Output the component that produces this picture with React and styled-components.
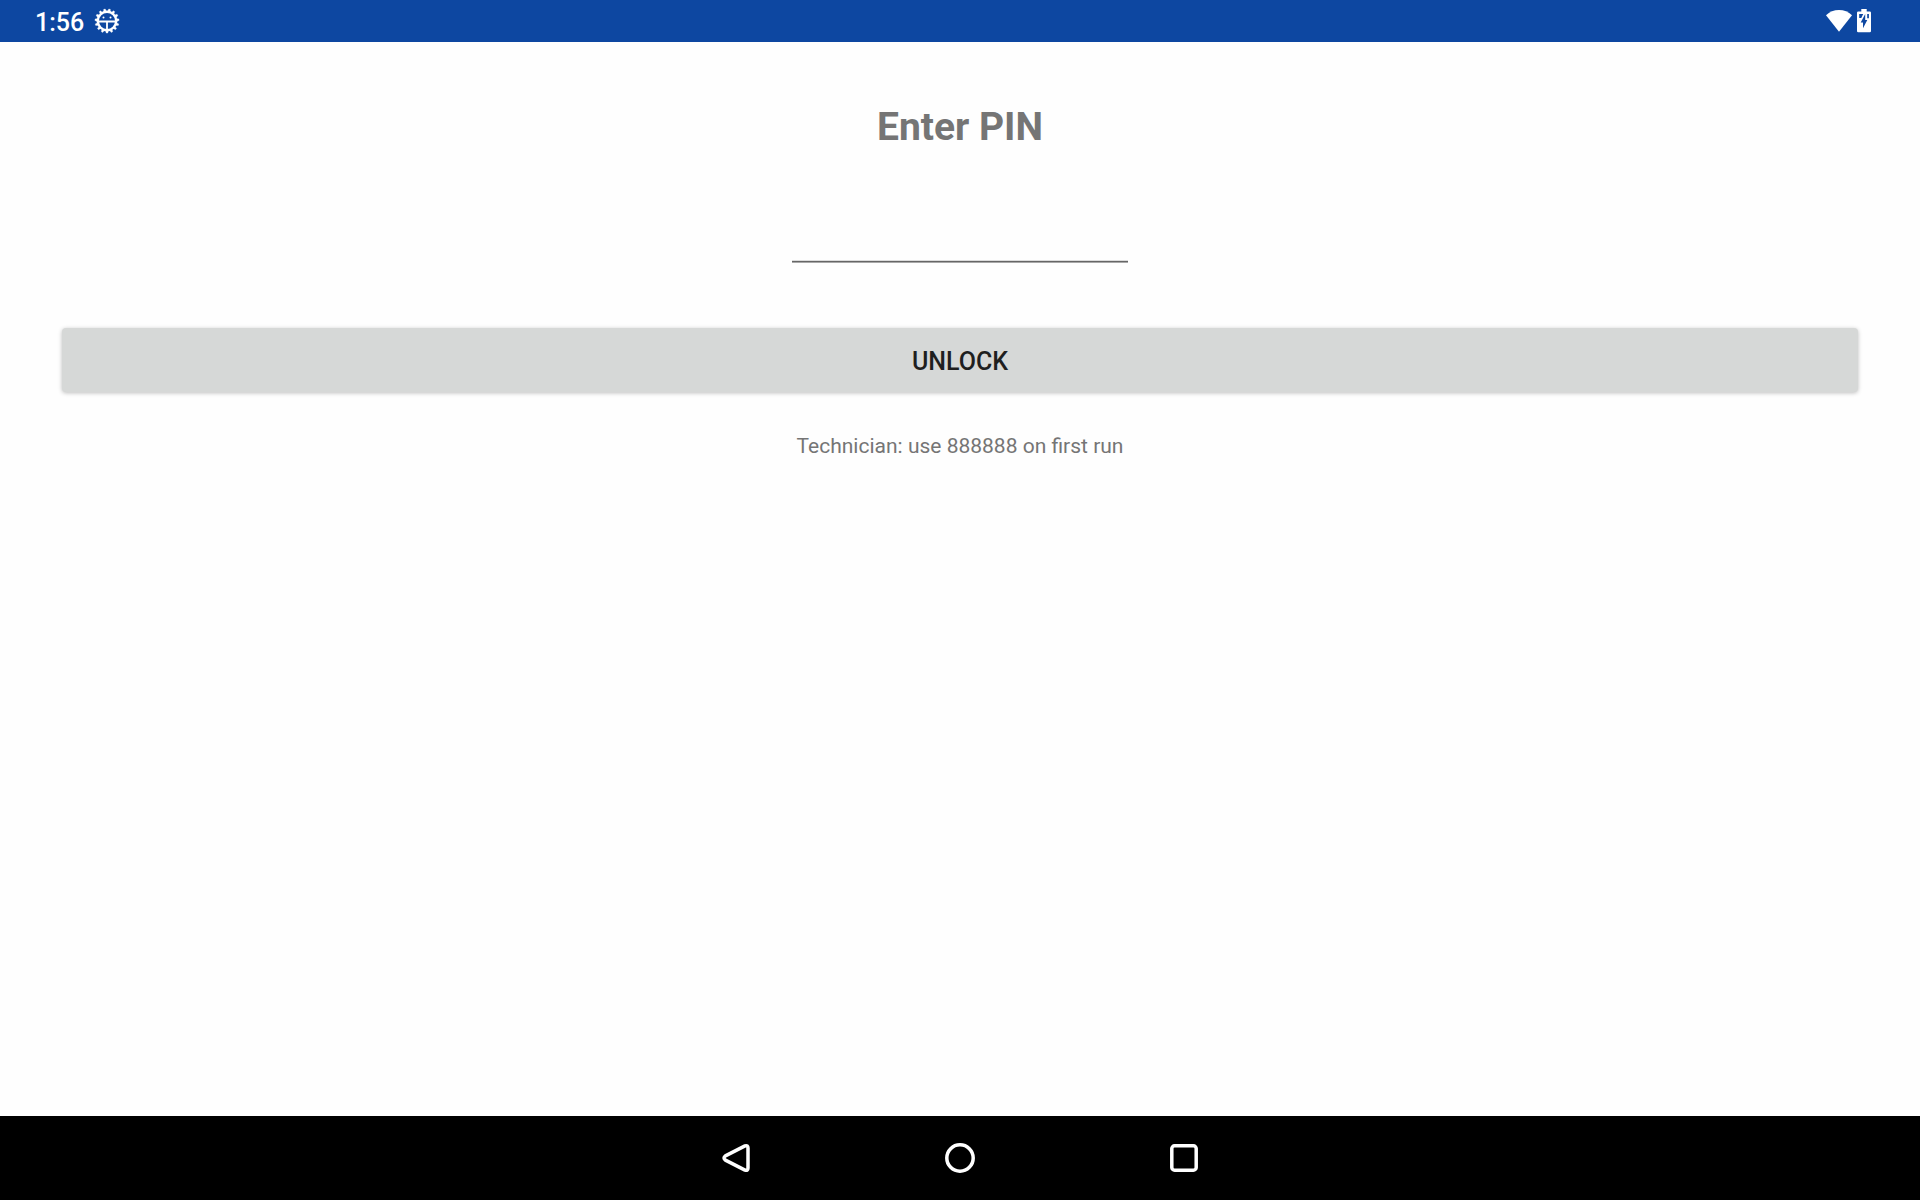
import React, { useState } from "react";
import styled, { createGlobalStyle } from "styled-components";

const GlobalStyle = createGlobalStyle`
  * { box-sizing: border-box; }
  body {
    margin: 0;
    background: #fefefe;
    font-family: Roboto, "Noto Sans", sans-serif;
  }
`;

const Screen = styled.div`
  min-height: 100vh;
  display: flex;
  flex-direction: column;
`;

const StatusBar = styled.header`
  height: 42px;
  padding: 0 49px 0 35px;
  display: flex;
  align-items: center;
  justify-content: space-between;
  background: #0d47a1;
  color: #fff;
`;

const StatusGroup = styled.div`
  display: flex;
  align-items: center;
  gap: ${(p) => p.$gap}px;
`;

const Clock = styled.time`
  padding-top: 4px;
  font-size: 25px;
  line-height: 32px;
  font-weight: 500;
`;

const Icon = styled.svg`
  display: block;
  flex: none;
`;

const Main = styled.main`
  flex: 1;
  padding: 61px 62px;
`;

const PinForm = styled.form`
  display: flex;
  flex-direction: column;
  align-items: center;
`;

const Title = styled.label`
  font-size: 39px;
  line-height: 48px;
  font-weight: 700;
  color: #757575;
`;

const PinInput = styled.input`
  width: 336px;
  height: 64px;
  margin-top: 47px;
  padding: 0 0 8px;
  border: 0;
  border-bottom: 1px solid #666;
  border-radius: 0;
  box-shadow: 0 1px #a8a8a8, inset 0 -1px #dcdcdc;
  outline: none;
  background: transparent;
  font: 32px/40px Roboto, sans-serif;
  text-align: center;
  color: #212121;
`;

const UnlockButton = styled.button`
  width: 100%;
  height: 64px;
  margin-top: 66px;
  padding: 4px 0 0;
  border: 0;
  border-radius: 4px;
  background: #d6d8d7;
  box-shadow: 0 1px 4px rgba(0, 0, 0, 0.26);
  font: 500 25px/32px Roboto, sans-serif;
  color: #1f1f1f;
`;

const Hint = styled.p`
  margin: 38px 0 0;
  font-size: 21px;
  line-height: 32px;
  color: #757575;
`;

const NavBar = styled.nav`
  height: 84px;
  display: flex;
  justify-content: center;
  background: #000;
`;

const NavButton = styled.button`
  width: 224px;
  padding: 0;
  border: 0;
  display: flex;
  align-items: center;
  justify-content: center;
  background: transparent;
  color: #fff;
`;

const teeth = Array.from({ length: 15 }, (_, i) => 180 + i * 24);

function GearIcon() {
  return (
    <Icon width="26" height="26" viewBox="0 0 26 26" fill="none" stroke="#fff" aria-hidden="true">
      <circle cx="13" cy="13" r="9.2" strokeWidth="2.4" />
      {teeth.map((a) => (
        <path key={a} d="M11.6 3.4 L12.2 0.9 H13.8 L14.4 3.4Z" fill="#fff" strokeWidth="0.3" transform={`rotate(${a} 13 13)`} />
      ))}
      <path d="M4 13.500H22M13 13.500V22" strokeWidth="1.8" />
      <circle cx="9.500" cy="9.500" r="1" fill="#fff" stroke="none" />
      <circle cx="16.500" cy="9.500" r="1" fill="#fff" stroke="none" />
    </Icon>
  );
}

function WifiIcon() {
  return (
    <Icon width="26" height="22" viewBox="0 0 26 22" fill="#fff" aria-hidden="true">
      <path d="M13 21.8 L0 5.2 C3.5 1.9 8 0 13 0 S22.5 1.9 26 5.2Z" />
    </Icon>
  );
}

function BatteryIcon() {
  return (
    <Icon width="14" height="24" viewBox="0 0 14 24" aria-hidden="true">
      <path d="M4.3 0H9.7V2.5H12.8Q14 2.5 14 3.7V22Q14 23.2 12.8 23.2H1.2Q0 23.2 0 22V3.7Q0 2.5 1.2 2.5H4.3Z" fill="#fff" />
      <path d="M2.2 5H6.2L4.3 9H2.2ZM11.9 5V9.3H10.2V5ZM8.2 5V11H10.3L6 19.3V13.5H3.7Z" fill="#0d47a1" />
    </Icon>
  );
}

function BackIcon() {
  return (
    <Icon width="32" height="32" viewBox="0 0 32 32" fill="none" stroke="#fff" strokeWidth="3.5" strokeLinejoin="round" aria-hidden="true">
      <path d="M25 3.9 L5.4 13.9 Q2.6 16 5.4 18.1 L25 28.1 Q28 29 28 26 V6 Q28 3 25 3.9Z" />
    </Icon>
  );
}

function HomeIcon() {
  return (
    <Icon width="32" height="32" viewBox="0 0 32 32" fill="none" stroke="#fff" strokeWidth="3.5" aria-hidden="true">
      <circle cx="16" cy="16" r="13.2" />
    </Icon>
  );
}

function RecentsIcon() {
  return (
    <Icon width="32" height="32" viewBox="0 0 32 32" fill="none" stroke="#fff" strokeWidth="3.5" aria-hidden="true">
      <rect x="3.8" y="3.8" width="24.4" height="24.4" rx="2.8" />
    </Icon>
  );
}

export default function App() {
  const [pin, setPin] = useState("");

  return (
    <Screen>
      <GlobalStyle />
      <StatusBar>
        <StatusGroup $gap={10}>
          <Clock>1:56</Clock>
          <GearIcon />
        </StatusGroup>
        <StatusGroup $gap={5}>
          <WifiIcon />
          <BatteryIcon />
        </StatusGroup>
      </StatusBar>
      <Main>
        <PinForm onSubmit={(e) => e.preventDefault()}>
          <Title htmlFor="pin">Enter PIN</Title>
          <PinInput
            id="pin"
            type="password"
            inputMode="numeric"
            autoComplete="off"
            value={pin}
            onChange={(e) => setPin(e.target.value)}
          />
          <UnlockButton type="submit">UNLOCK</UnlockButton>
          <Hint>Technician: use 888888 on first run</Hint>
        </PinForm>
      </Main>
      <NavBar aria-label="System navigation">
        <NavButton type="button" aria-label="Back"><BackIcon /></NavButton>
        <NavButton type="button" aria-label="Home"><HomeIcon /></NavButton>
        <NavButton type="button" aria-label="Recent apps"><RecentsIcon /></NavButton>
      </NavBar>
    </Screen>
  );
}
